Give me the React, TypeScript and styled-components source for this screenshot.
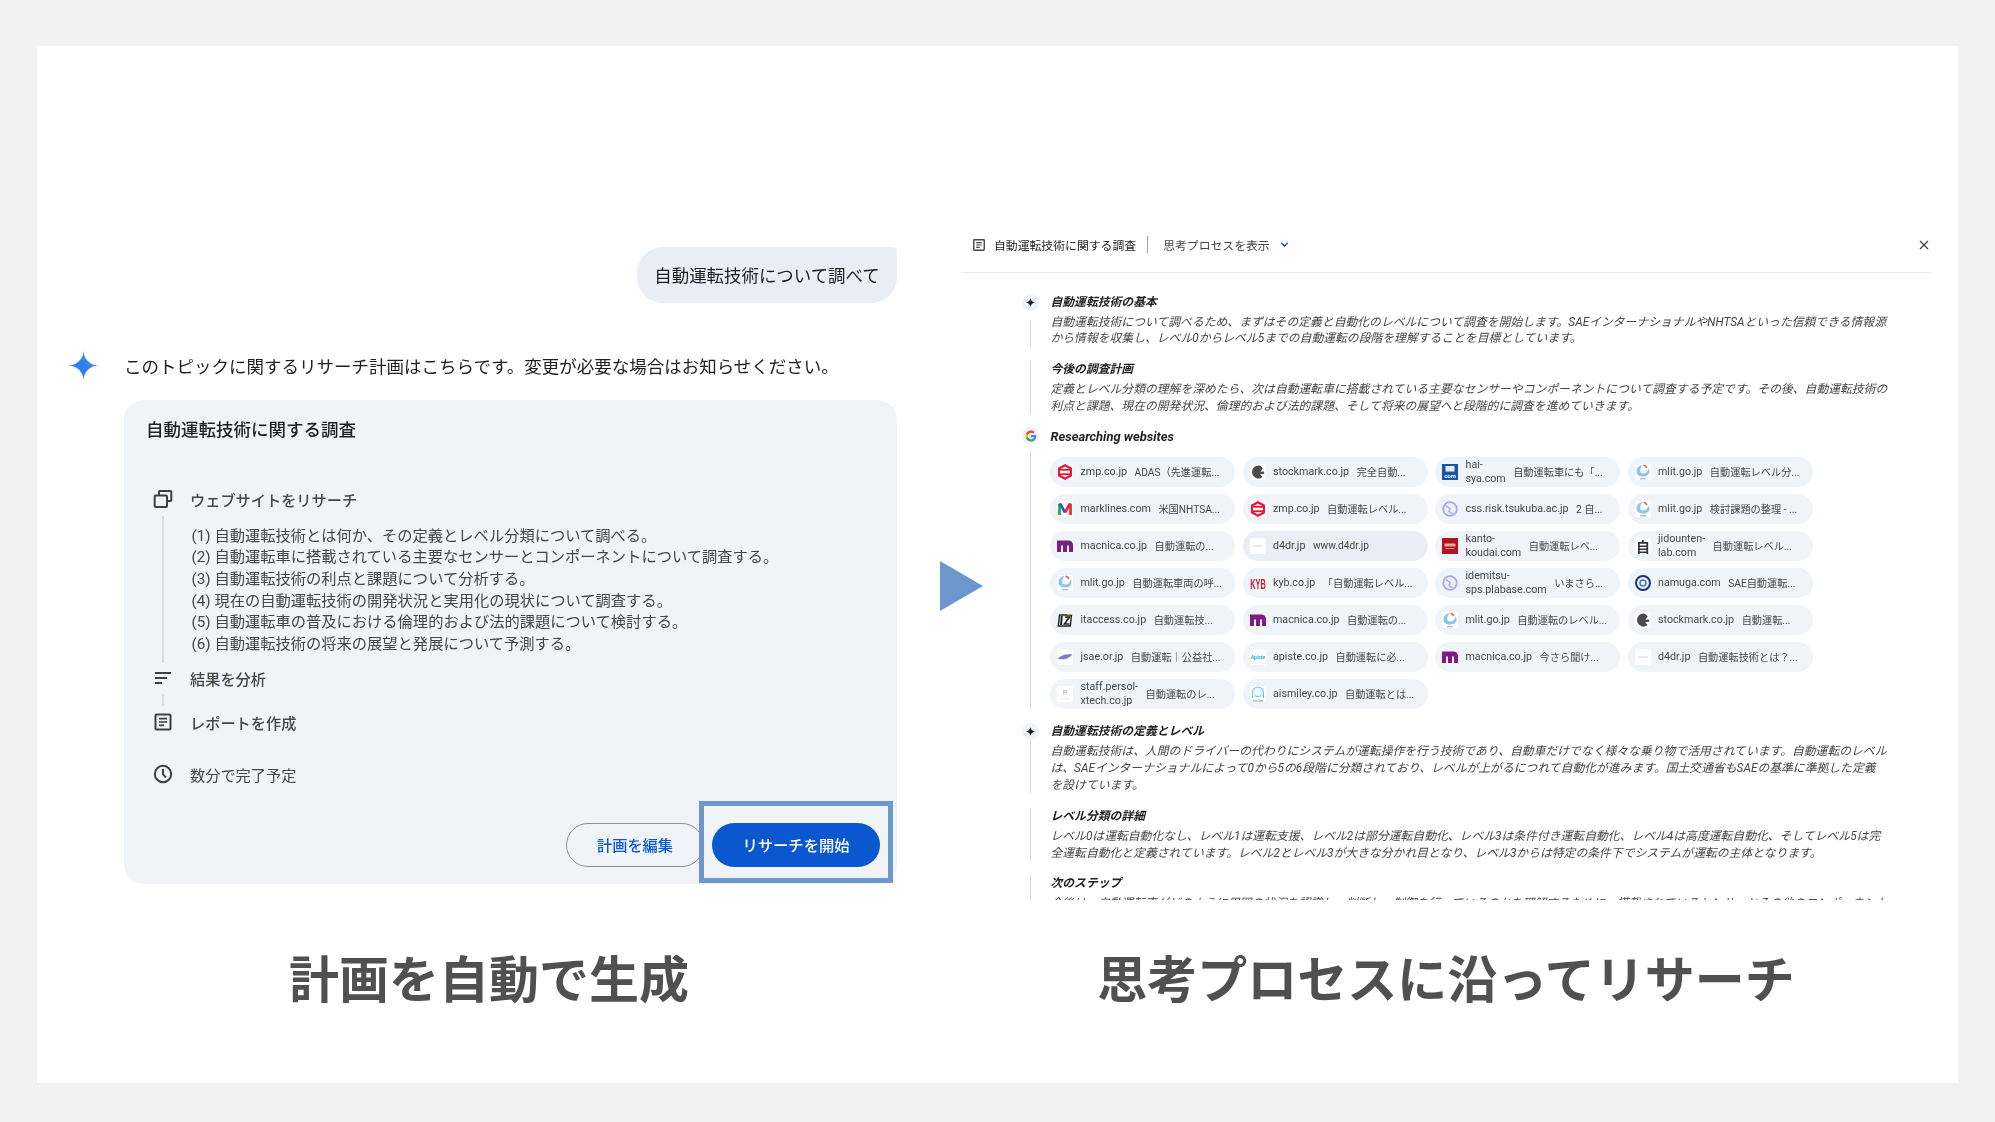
import React from "react";
import styled, { createGlobalStyle } from "styled-components";

const FONT = `"Roboto", "Noto Sans CJK JP", sans-serif`;

const Global = createGlobalStyle`
  html, body { margin: 0; padding: 0; background: #f2f2f2; }
  * { box-sizing: border-box; }
`;

const Page = styled.div`
  width: 1995px;
  height: 1122px;
  padding: 46px 37px 39px;
  background: #f2f2f2;
  font-family: ${FONT};
  overflow: hidden;
`;
const Slide = styled.main`
  display: flex;
  align-items: flex-start;
  height: 1037px;
  padding: 186px 27px 0 32px;
  background: #ffffff;
  filter: blur(0.35px);
`;
const LeftCol = styled.section`
  display: flex;
  flex-direction: column;
  width: 828px;
  flex: none;
  padding-top: 15px;
`;
const Bubble = styled.div`
  align-self: flex-end;
  display: flex;
  align-items: center;
  justify-content: center;
  width: 260px;
  height: 56px;
  padding-bottom: 2px;
  border-radius: 26px 4px 26px 26px;
  background: #e9eef6;
  color: #1f1f1f;
  font-size: 17.45px;
`;
const AssistantRow = styled.div`
  display: flex;
  align-items: center;
  gap: 26px;
  height: 34px;
  margin-top: 45px;
  color: #1f1f1f;
  font-size: 17.5px;
`;
const Card = styled.div`
  position: relative;
  display: flex;
  flex-direction: column;
  height: 484px;
  margin: 18px 0 0 54.5px;
  padding: 18px 17px 17px 0;
  border-radius: 20px;
  background: #f0f4f9;
`;
const CardTitle = styled.h2`
  margin: 0 0 0 22.5px;
  height: 24px;
  font-size: 17.5px;
  line-height: 24px;
  font-weight: 500;
  color: #1f1f1f;
`;
const Step = styled.div<{ $top: number; $muted?: boolean }>`
  display: flex;
  align-items: center;
  height: 20px;
  margin-top: ${(p) => p.$top}px;
  color: #444746;
  font-size: 15.2px;
  font-weight: ${(p) => (p.$muted ? 400 : 500)};
`;
const StepIcon = styled.span`
  display: flex;
  align-items: center;
  justify-content: center;
  flex: none;
  width: 20px;
  height: 20px;
  margin: 0 17px 0 29.5px;
  color: #3c4043;
`;
const Detail = styled.div`
  display: flex;
  margin-top: 7px;
`;
const Connector = styled.span<{ $h?: number }>`
  display: block;
  flex: none;
  width: 2px;
  height: ${(p) => p.$h ?? 147}px;
  margin-left: 38.5px;
  background: #d9dcdf;
`;
const StepLines = styled.p`
  margin: 9.5px 0 0 27.5px;
  height: 130px;
  color: #444746;
  font-size: 15.27px;
  line-height: 21.7px;
  white-space: pre;
`;
const ConnectorRow = styled.div`
  margin-top: 6px;
`;
const ButtonRow = styled.div`
  display: flex;
  justify-content: flex-end;
  gap: 8px;
  margin-top: 39px;
`;
const OutlineButton = styled.button`
  width: 138px;
  height: 44px;
  padding: 0 0 2px;
  border: 1.5px solid #8e918f;
  border-radius: 22px;
  background: transparent;
  color: #0b57d0;
  font-family: ${FONT};
  font-size: 15.2px;
  font-weight: 500;
`;
const PrimaryButton = styled.button`
  width: 168px;
  height: 44px;
  padding: 0 0 2px;
  border: 0;
  border-radius: 22px;
  background: #0b57d0;
  color: #ffffff;
  font-family: ${FONT};
  font-size: 15.3px;
  font-weight: 500;
`;
const Highlight = styled.span`
  position: absolute;
  right: 4px;
  bottom: 1px;
  width: 194px;
  height: 82px;
  border: 5px solid #6e98cb;
  pointer-events: none;
`;
const Caption = styled.h1<{ $shift?: number }>`
  margin: 0;
  height: 70px;
  padding-left: ${(p) => p.$shift ?? 0}px;
  color: #505050;
  font-size: 50px;
  font-weight: 700;
  line-height: 70px;
  text-align: center;
  white-space: nowrap;
`;
const LeftCaption = styled(Caption)`
  margin-top: 62px;
`;
const RightCaption = styled(Caption)`
  margin-top: 46px;
`;
const ArrowBox = styled.div`
  flex: none;
  width: 43px;
  height: 50px;
  margin: 329px -22px 0 43px;
`;
const RightCol = styled.section`
  flex: none;
  width: 970px;
`;
const PanelHeader = styled.header`
  display: flex;
  align-items: center;
  height: 41px;
  padding: 0 2px 15px 11px;
  border-bottom: 1px solid #e8eaed;
  color: #444746;
  font-size: 11.85px;
`;
const HeaderTitle = styled.span`
  margin-left: 8px;
  color: #1f1f1f;
`;
const HeaderDivider = styled.span`
  width: 1px;
  height: 17px;
  margin: 0 15px 0 11px;
  background: #9aa0a6;
`;
const Chevron = styled.span`
  display: flex;
  margin-left: 10px;
  color: #0b57d0;
`;
const CloseMark = styled.span`
  display: flex;
  margin-left: auto;
  color: #444746;
`;
const PanelBody = styled.div`
  height: 627px;
  padding: 20.5px 0 0 59px;
  overflow: hidden;
`;
const Row = styled.div<{ $top?: number }>`
  display: flex;
  margin-top: ${(p) => p.$top ?? 0}px;
`;
const Rail = styled.div`
  display: flex;
  flex-direction: column;
  align-items: center;
  flex: none;
  width: 21px;
  margin-right: 9.5px;
`;
const RailLine = styled.span<{ $offset?: number }>`
  flex: 1;
  width: 1px;
  margin-top: ${(p) => p.$offset ?? 0}px;
  background: #d5d8dc;
`;
const Badge = styled.span`
  display: flex;
  align-items: center;
  justify-content: center;
  width: 17px;
  height: 17px;
  border-radius: 50%;
  background: #eef2f9;
`;
const Thought = styled.h3`
  margin: 0;
  color: #1f1f1f;
  font-size: 11.82px;
  font-style: italic;
  font-weight: 700;
  line-height: 17px;
`;
const LatinThought = styled(Thought)`
  padding-top: 1px;
  font-size: 12.9px;
`;
const ThoughtText = styled.p<{ $top?: number }>`
  margin: ${(p) => p.$top ?? 3}px 0 0;
  color: #444746;
  font-size: 11.82px;
  font-style: italic;
  line-height: 16.7px;
  white-space: pre;
`;
const ChipGrid = styled.div`
  display: grid;
  grid-template-columns: repeat(4, 185px);
  grid-auto-rows: 30px;
  gap: 7px 7.5px;
  padding: 11.5px 0 0 0;
  margin-left: -0.5px;
`;
const Chip = styled.div<{ $active?: boolean }>`
  display: flex;
  align-items: center;
  gap: 7.5px;
  height: 30px;
  padding: 0 7px;
  border-radius: 15px;
  background: ${(p) => (p.$active ? "#e9eef6" : "#f0f4f9")};
  color: #444746;
  font-size: 10.2px;
  white-space: nowrap;
`;
const Favicon = styled.span`
  display: flex;
  flex: none;
  width: 16px;
  height: 16px;
  border-radius: 2px;
  background: #ffffff;
`;
const Domain = styled.span`
  flex: none;
  width: min-content;
  font-size: 10.7px;
  line-height: 14px;
  white-space: normal;
`;

const Gem = ({ size }: { size: number }) => (
  <svg width={size} height={size} viewBox="0 0 28 28" style={{ flex: "none" }}>
    <defs>
      <linearGradient id="gemFill" x1="0" y1="1" x2="1" y2="0">
        <stop offset="0" stopColor="#3b78e7" />
        <stop offset="0.55" stopColor="#2f80f0" />
        <stop offset="1" stopColor="#6cb2ff" />
      </linearGradient>
    </defs>
    <path d="M14 0C14.6 8 20 13.4 28 14 20 14.6 14.6 20 14 28 13.4 20 8 14.6 0 14 8 13.4 13.4 8 14 0Z" fill="url(#gemFill)" />
  </svg>
);
const SmallGem = () => (
  <svg width="9" height="9" viewBox="0 0 28 28">
    <path d="M14 0C15 8 20 13 28 14 20 15 15 20 14 28 13 20 8 15 0 14 8 13 13 8 14 0Z" fill="#1f1f1f" />
  </svg>
);
const WindowIcon = () => (
  <svg width="20" height="20" viewBox="0 0 20 20" fill="none" stroke="currentColor" strokeWidth="2">
    <path d="M6 6.2V2.8a.9.9 0 0 1 .9-.9h10.5a.9.9 0 0 1 .9.9v8.2a.9.9 0 0 1-.9.9h-3.4" />
    <rect x="1.7" y="6.4" width="12.3" height="11.6" rx="1" />
  </svg>
);
const SortIcon = () => (
  <svg width="20" height="20" viewBox="0 0 20 20" fill="none" stroke="currentColor" strokeWidth="2">
    <path d="M2 5h16M2 10h12M2 15h7" />
  </svg>
);
const DocIcon = ({ size = 20 }: { size?: number }) => (
  <svg width={size} height={size} viewBox="0 0 20 20" fill="none" stroke="currentColor" strokeWidth="2">
    <rect x="2.5" y="2.5" width="15" height="15" rx="1" />
    <path d="M6 6.6h8M6 10h8M6 13.4h5" strokeWidth="1.6" />
  </svg>
);
const ClockIcon = () => (
  <svg width="20" height="20" viewBox="0 0 20 20" fill="none" stroke="currentColor" strokeWidth="2">
    <circle cx="10" cy="10" r="8.2" />
    <path d="M10 5v5.4l3 3" />
  </svg>
);
const GoogleG = () => (
  <svg width="12" height="12" viewBox="0 0 24 24">
    <path d="M22.56 12.25c0-.78-.07-1.53-.2-2.25H12v4.26h5.92c-.26 1.37-1.04 2.53-2.21 3.31v2.77h3.57c2.08-1.92 3.28-4.74 3.28-8.09z" fill="#4285F4" />
    <path d="M12 23c2.97 0 5.46-.98 7.28-2.66l-3.57-2.77c-.98.66-2.23 1.06-3.71 1.06-2.86 0-5.29-1.93-6.16-4.53H2.18v2.84C3.99 20.53 7.7 23 12 23z" fill="#34A853" />
    <path d="M5.84 14.09c-.22-.66-.35-1.36-.35-2.09s.13-1.43.35-2.09V7.07H2.18C1.43 8.55 1 10.22 1 12s.43 3.45 1.18 4.93l2.85-2.22.81-.62z" fill="#FBBC05" />
    <path d="M12 5.38c1.62 0 3.06.56 4.21 1.64l3.15-3.15C17.45 2.09 14.97 1 12 1 7.7 1 3.99 3.47 2.18 7.07l3.66 2.84c.87-2.6 3.3-4.53 6.16-4.53z" fill="#EA4335" />
  </svg>
);

type IconName =
  | "zmp" | "stockmark" | "hai" | "mlit" | "marklines" | "globe" | "macnica" | "d4dr"
  | "kanto" | "jidounten" | "kyb" | "namuga" | "itaccess" | "jsae" | "apiste" | "persol" | "aismiley";

const Logo = ({ name }: { name: IconName }) => {
  const body = () => {
    switch (name) {
      case "zmp":
        return (
          <>
            <path d="M8 0 15 3.8v8.4L8 16 1 12.2V3.8Z" fill="#e8173a" />
            <path d="M8 2.5 12.5 5H3.5Z" fill="#fff" opacity="0.85" />
            <rect x="3" y="6.7" width="10" height="2.6" fill="#fff" />
            <path d="M3.5 11h9L8 13.5Z" fill="#fff" opacity="0.85" />
          </>
        );
      case "stockmark":
        return <path d="M9 1.5a6.5 6.5 0 1 0 3.6 11.6L10 10.2l4.5-.4-1-2.6-3 .8 2.2-3.8A6.5 6.5 0 0 0 9 1.5Z" fill="#4b4b4b" />;
      case "hai":
        return (
          <>
            <rect width="16" height="16" fill="#1456a8" />
            <rect x="3.5" y="2" width="9" height="5.5" fill="#e7eef8" />
            <text x="8" y="13.5" fontSize="6" fontWeight="700" fill="#fff" textAnchor="middle" fontFamily="Roboto">com</text>
          </>
        );
      case "mlit":
        return (
          <>
            <path d="M7.5 1C3.8 1.5 1.5 4.2 1.5 7.5c0 3 2.7 5 6.5 5s6.500-2 6.500-5c0-1.300-.4-2.400-1-3.300-.5 3-2.800 5.300-5.500 5.300S3.600 6.500 7.500 1Z" fill="#8ec5ea" />
            <path d="M8.5 1.2a4 4 0 0 1 3.3 3" stroke="#e8594a" strokeWidth="1.4" fill="none" />
            <rect x="5" y="14.3" width="6" height="1" fill="#9aa0a6" />
          </>
        );
      case "marklines":
        return (
          <>
            <path d="M2.5 14V2.5" stroke="#25a85a" strokeWidth="2.8" fill="none" />
            <path d="M3 2.5 8 11.5" stroke="#3450c8" strokeWidth="2.6" fill="none" />
            <path d="M8 11.5 13 2.5" stroke="#d31f6e" strokeWidth="2.6" fill="none" />
            <path d="M13.5 2.5V14" stroke="#e8332c" strokeWidth="2.8" fill="none" />
          </>
        );
      case "globe":
        return (
          <>
            <rect width="16" height="16" fill="#f0f4f9" />
            <circle cx="8" cy="8" r="6.8" fill="#eef0fb" stroke="#a8abe2" strokeWidth="1.8" />
            <path d="M3.5 4.5 8 7.5 7 10.5 10.5 13" fill="none" stroke="#a8abe2" strokeWidth="1.5" />
          </>
        );
      case "macnica":
        return (
          <>
            <rect width="16" height="16" fill="#f0f4f9" />
            <path d="M0 2.5h11.5A4.5 4.5 0 0 1 16 7v7h-4V7.5H10V14H6V7.5H4V14H0Z" fill="#7b1d84" />
          </>
        );
      case "d4dr":
        return <rect x="3" y="7.6" width="10" height="0.9" fill="#d9c8cc" />;
      case "kanto":
        return (
          <>
            <rect width="16" height="16" fill="#b2151f" />
            <rect x="2.5" y="5.5" width="11" height="3" fill="#e8a9ad" />
            <rect x="3.5" y="10" width="9" height="1" fill="#d9787d" />
          </>
        );
      case "jidounten":
        return (
          <text x="8" y="13.5" fontSize="14" fontWeight="700" fill="#333" textAnchor="middle" fontFamily="Noto Sans CJK JP">自</text>
        );
      case "kyb":
        return (
          <>
            <rect width="16" height="16" fill="#f0f4f9" />
            <g transform="scale(1 1.55)">
              <text x="8" y="9" fontSize="9" fontWeight="700" fill="#d8142c" textAnchor="middle" fontFamily="Liberation Sans" textLength="15.5" lengthAdjust="spacingAndGlyphs">KYB</text>
            </g>
          </>
        );
      case "namuga":
        return (
          <>
            <rect width="16" height="16" fill="#f0f4f9" />
            <circle cx="8" cy="8" r="7" fill="none" stroke="#22307c" strokeWidth="2" />
            <circle cx="8" cy="8" r="3" fill="none" stroke="#3c7cc0" strokeWidth="1.6" />
          </>
        );
      case "itaccess":
        return (
          <>
            <rect width="16" height="16" fill="#f0f4f9" />
            <path d="M2.5 3h12l-1.2 11h-12Z" fill="none" stroke="#222" strokeWidth="1.4" />
            <path d="M8 5h4.5L7.5 12h5" fill="none" stroke="#222" strokeWidth="1.6" />
            <path d="M4.8 4 4 13" stroke="#222" strokeWidth="2" />
            <path d="M10 2.5h5" stroke="#d8b400" strokeWidth="1" />
          </>
        );
      case "jsae":
        return <path d="M0.5 9.5C4 7 8 4.5 15.5 5.5 13 8 10 10.5 5 10.3 3.5 10.2 2 10.5 0.5 9.5Z" fill="#7a7fc8" />;
      case "apiste":
        return (
          <text x="8" y="10" fontSize="5.2" fontWeight="700" fontStyle="italic" fill="#27a7e0" textAnchor="middle" fontFamily="Roboto">Apiste</text>
        );
      case "persol":
        return (
          <>
            <text x="8" y="9" fontSize="6.5" fill="#9a9a9a" textAnchor="middle" fontFamily="Roboto">P</text>
            <rect x="2.5" y="12.5" width="11" height="0.7" fill="#e2e2e2" />
          </>
        );
      case "aismiley":
        return (
          <>
            <path d="M2.5 12V6.5a5.5 5.5 0 0 1 11 0V12" fill="#e9f7fa" stroke="#6fc3d4" strokeWidth="1.1" />
            <path d="M5 9.500c1.500 1.400 4.500 1.400 6 0" fill="none" stroke="#6fc3d4" strokeWidth="1" />
            <text x="8" y="15.8" fontSize="3.6" fill="#777" textAnchor="middle" fontFamily="Roboto">Smiley</text>
          </>
        );
    }
  };
  return (
    <Favicon>
      <svg width="16" height="16" viewBox="0 0 16 16">{body()}</svg>
    </Favicon>
  );
};

const chips: { icon: IconName; domain: string; title: string; active?: boolean }[] = [
  { icon: "zmp", domain: "zmp.co.jp", title: "ADAS（先進運転..." },
  { icon: "stockmark", domain: "stockmark.co.jp", title: "完全自動..." },
  { icon: "hai", domain: "hai-sya.com", title: "自動運転車にも「..." },
  { icon: "mlit", domain: "mlit.go.jp", title: "自動運転レベル分..." },
  { icon: "marklines", domain: "marklines.com", title: "米国NHTSA..." },
  { icon: "zmp", domain: "zmp.co.jp", title: "自動運転レベル..." },
  { icon: "globe", domain: "css.risk.tsukuba.ac.jp", title: "2 自..." },
  { icon: "mlit", domain: "mlit.go.jp", title: "検討課題の整理 - ..." },
  { icon: "macnica", domain: "macnica.co.jp", title: "自動運転の..." },
  { icon: "d4dr", domain: "d4dr.jp", title: "www.d4dr.jp", active: true },
  { icon: "kanto", domain: "kanto-koudai.com", title: "自動運転レベ..." },
  { icon: "jidounten", domain: "jidounten-lab.com", title: "自動運転レベル..." },
  { icon: "mlit", domain: "mlit.go.jp", title: "自動運転車両の呼..." },
  { icon: "kyb", domain: "kyb.co.jp", title: "「自動運転レベル..." },
  { icon: "globe", domain: "idemitsu-sps.plabase.com", title: "いまさら..." },
  { icon: "namuga", domain: "namuga.com", title: "SAE自動運転..." },
  { icon: "itaccess", domain: "itaccess.co.jp", title: "自動運転技..." },
  { icon: "macnica", domain: "macnica.co.jp", title: "自動運転の..." },
  { icon: "mlit", domain: "mlit.go.jp", title: "自動運転のレベル..." },
  { icon: "stockmark", domain: "stockmark.co.jp", title: "自動運転..." },
  { icon: "jsae", domain: "jsae.or.jp", title: "自動運転｜公益社..." },
  { icon: "apiste", domain: "apiste.co.jp", title: "自動運転に必..." },
  { icon: "macnica", domain: "macnica.co.jp", title: "今さら聞け..." },
  { icon: "d4dr", domain: "d4dr.jp", title: "自動運転技術とは？..." },
  { icon: "persol", domain: "staff.persol-xtech.co.jp", title: "自動運転のレ..." },
  { icon: "aismiley", domain: "aismiley.co.jp", title: "自動運転とは..." },
];

const planLines = `(1) 自動運転技術とは何か、その定義とレベル分類について調べる。
(2) 自動運転車に搭載されている主要なセンサーとコンポーネントについて調査する。
(3) 自動運転技術の利点と課題について分析する。
(4) 現在の自動運転技術の開発状況と実用化の現状について調査する。
(5) 自動運転車の普及における倫理的および法的課題について検討する。
(6) 自動運転技術の将来の展望と発展について予測する。`;

export default function App() {
  return (
    <Page>
      <Global />
      <Slide>
        <LeftCol>
          <Bubble>自動運転技術について調べて</Bubble>
          <AssistantRow>
            <Gem size={29} />
            <span>このトピックに関するリサーチ計画はこちらです。変更が必要な場合はお知らせください。</span>
          </AssistantRow>
          <Card>
            <CardTitle>自動運転技術に関する調査</CardTitle>
            <Step $top={47}>
              <StepIcon><WindowIcon /></StepIcon>ウェブサイトをリサーチ
            </Step>
            <Detail>
              <Connector />
              <StepLines>{planLines}</StepLines>
            </Detail>
            <Step $top={5}>
              <StepIcon><SortIcon /></StepIcon>結果を分析
            </Step>
            <ConnectorRow><Connector $h={12} /></ConnectorRow>
            <Step $top={6}>
              <StepIcon><DocIcon /></StepIcon>レポートを作成
            </Step>
            <Step $top={32} $muted>
              <StepIcon><ClockIcon /></StepIcon>数分で完了予定
            </Step>
            <ButtonRow>
              <OutlineButton>計画を編集</OutlineButton>
              <PrimaryButton>リサーチを開始</PrimaryButton>
            </ButtonRow>
            <Highlight />
          </Card>
          <LeftCaption $shift={12}>計画を自動で生成</LeftCaption>
        </LeftCol>

        <ArrowBox>
          <svg width="43" height="50" viewBox="0 0 43 50">
            <path d="M0 0 43 25 0 50Z" fill="#6b97cd" />
          </svg>
        </ArrowBox>

        <RightCol>
          <PanelHeader>
            <DocIcon size={14} />
            <HeaderTitle>自動運転技術に関する調査</HeaderTitle>
            <HeaderDivider />
            <span>思考プロセスを表示</span>
            <Chevron>
              <svg width="9" height="9" viewBox="0 0 10 10" fill="none" stroke="currentColor" strokeWidth="1.6">
                <path d="M1.5 3 5 6.8 8.5 3" />
              </svg>
            </Chevron>
            <CloseMark>
              <svg width="10" height="10" viewBox="0 0 10 10" fill="none" stroke="currentColor" strokeWidth="1.3">
                <path d="M1 1l8 8M9 1 1 9" />
              </svg>
            </CloseMark>
          </PanelHeader>
          <PanelBody>
            <Row>
              <Rail><Badge><SmallGem /></Badge></Rail>
              <Thought>自動運転技術の基本</Thought>
            </Row>
            <Row>
              <Rail><RailLine $offset={9} /></Rail>
              <ThoughtText>{`自動運転技術について調べるため、まずはその定義と自動化のレベルについて調査を開始します。SAEインターナショナルやNHTSAといった信頼できる情報源
から情報を収集し、レベル0からレベル5までの自動運転の段階を理解することを目標としています。`}</ThoughtText>
            </Row>
            <Row $top={14}>
              <Rail><RailLine /></Rail>
              <div>
                <Thought>今後の調査計画</Thought>
                <ThoughtText>{`定義とレベル分類の理解を深めたら、次は自動運転車に搭載されている主要なセンサーやコンポーネントについて調査する予定です。その後、自動運転技術の
利点と課題、現在の開発状況、倫理的および法的課題、そして将来の展望へと段階的に調査を進めていきます。`}</ThoughtText>
              </div>
            </Row>
            <Row $top={13}>
              <Rail><Badge><GoogleG /></Badge></Rail>
              <LatinThought>Researching websites</LatinThought>
            </Row>
            <Row>
              <Rail><RailLine $offset={6} /></Rail>
              <ChipGrid>
                {chips.map((c, i) => (
                  <Chip key={i} $active={c.active}>
                    <Logo name={c.icon} />
                    <Domain>{c.domain}</Domain>
                    <span>{c.title}</span>
                  </Chip>
                ))}
              </ChipGrid>
            </Row>
            <Row $top={14.5}>
              <Rail><Badge><SmallGem /></Badge></Rail>
              <Thought>自動運転技術の定義とレベル</Thought>
            </Row>
            <Row>
              <Rail><RailLine /></Rail>
              <ThoughtText>{`自動運転技術は、人間のドライバーの代わりにシステムが運転操作を行う技術であり、自動車だけでなく様々な乗り物で活用されています。自動運転のレベル
は、SAEインターナショナルによって0から5の6段階に分類されており、レベルが上がるにつれて自動化が進みます。国土交通省もSAEの基準に準拠した定義
を設けています。`}</ThoughtText>
            </Row>
            <Row $top={14.5}>
              <Rail><RailLine /></Rail>
              <div>
                <Thought>レベル分類の詳細</Thought>
                <ThoughtText>{`レベル0は運転自動化なし、レベル1は運転支援、レベル2は部分運転自動化、レベル3は条件付き運転自動化、レベル4は高度運転自動化、そしてレベル5は完
全運転自動化と定義されています。レベル2とレベル3が大きな分かれ目となり、レベル3からは特定の条件下でシステムが運転の主体となります。`}</ThoughtText>
              </div>
            </Row>
            <Row $top={13.5}>
              <Rail><RailLine /></Rail>
              <div>
                <Thought>次のステップ</Thought>
                <ThoughtText>{`今後は、自動運転車がどのように周囲の状況を認識し、判断し、制御を行っているのかを理解するために、搭載されているセンサーとその他のコンポーネント`}</ThoughtText>
              </div>
            </Row>
          </PanelBody>
          <RightCaption>思考プロセスに沿ってリサーチ</RightCaption>
        </RightCol>
      </Slide>
    </Page>
  );
}
